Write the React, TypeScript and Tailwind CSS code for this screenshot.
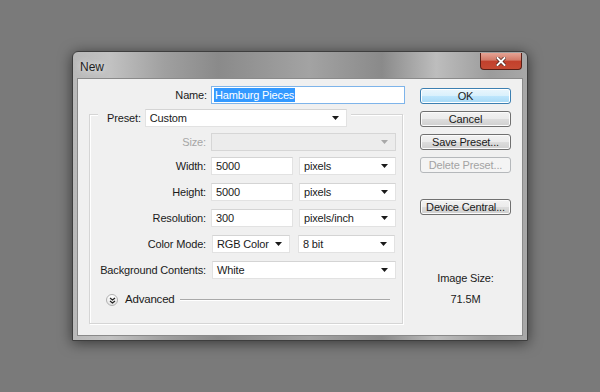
import React from "react"

const font = "font-['Liberation_Sans',Arial,sans-serif]"

function Caret({ light }: { light?: boolean }) {
  return (
    <svg width="7" height="4" viewBox="0 0 7 4" className="shrink-0">
      <path d="M0 0h7L3.5 4z" fill={light ? "#a8a8a8" : "#1a1a1a"} />
    </svg>
  )
}

function Select({ value, w, disabled }: { value?: string; w: string; disabled?: boolean }) {
  return (
    <div
      className={`${w} h-[18px] flex items-center justify-between pl-[4px] pr-[7px] border ${
        disabled
          ? "bg-[#ececec] border-[#d6d6d6]"
          : "bg-white border-[#e2e2e2] border-t-[#d4d4d4]"
      }`}
    >
      <span className="text-[#1a1a1a] leading-none">{value}</span>
      <Caret light={disabled} />
    </div>
  )
}

function Input({ value, w }: { value: string; w: string }) {
  return (
    <div className={`${w} h-[18px] flex items-center pl-[4px] bg-white border border-[#e2e2e2] border-t-[#d4d4d4]`}>
      <span className="leading-none">{value}</span>
    </div>
  )
}

function Row({ label, children, dim }: { label: string; children: React.ReactNode; dim?: boolean }) {
  return (
    <div className="flex items-center h-[18px]">
      <div className={`w-[117px] text-right pr-[1px] ${dim ? "text-[#a6a6a6]" : ""}`}>{label}</div>
      <div className="ml-[4px] flex gap-[6px]">{children}</div>
    </div>
  )
}

function Button({ label, primary, disabled }: { label: string; primary?: boolean; disabled?: boolean }) {
  const look = primary
    ? "border-[#3c7fb1] bg-[linear-gradient(#eaf6fd,#d9f0fc_50%,#bee6fd_51%,#a7d9f5)] shadow-[inset_0_0_0_1px_#ffffff]"
    : disabled
    ? "border-[#b5b8bb] bg-[#f4f4f4] text-[#a3a3a3]"
    : "border-[#707070] bg-[linear-gradient(#f2f2f2,#ebebeb_50%,#dddddd_51%,#cfcfcf)] shadow-[inset_0_0_0_1px_#fbfbfb]"
  return (
    <div className={`w-[91px] h-[16px] rounded-[3px] border flex items-center justify-center ${look}`}>
      {label}
    </div>
  )
}

export default function App() {
  return (
    <div className={`w-[600px] h-[392px] bg-[#7a7a7a] flex items-center justify-center ${font} text-[11px] tracking-[-0.15px] text-[#1a1a1a]`}>
      <div className="w-[456px] h-[290px] rounded-t-[6px] border border-[#3e3e3e] shadow-[0_2px_14px_rgba(0,0,0,0.55)] bg-[linear-gradient(90deg,#b9b9b9,#c2c2c2_8%,#a0a0a0_20%,#8a8a8a_32%,#a3a3a3_52%,#8a8a8a_68%,#bdbdbd_80%,#9c9c9c_92%,#a8a8a8)] flex flex-col px-[4px] pb-[4px]">
        {/* title bar */}
        <div className="h-[26px] flex items-start justify-between">
          <div className="pl-[3px] pt-[6px] text-[12px] tracking-normal text-[#1e1e1e] [text-shadow:0_0_6px_rgba(255,255,255,0.9)]">
            New
          </div>
          <div className="w-[42px] h-[17px] mt-[1px] mr-[1px] rounded-b-[4px] border border-[#5a1f16] border-t-0 bg-[linear-gradient(#e6a394,#d27a68_45%,#c2402c_50%,#c54a33)] flex items-center justify-center">
            <svg width="10" height="9" viewBox="0 0 10 9">
              <path d="M1.5 1l7 7M8.5 1l-7 7" stroke="#4a1a12" strokeWidth="3.4" strokeLinecap="square" />
              <path d="M1.5 1l7 7M8.5 1l-7 7" stroke="#ffffff" strokeWidth="2" strokeLinecap="square" />
            </svg>
          </div>
        </div>

        {/* content panel */}
        <div className="flex-1 bg-[#f0f0f0] border border-[#8a8a8a] flex">
          {/* left column */}
          <div className="w-[331px] pl-[11px] pt-[7px] flex flex-col">
            <div className="flex items-center h-[18px]">
              <div className="w-[118px] text-right">Name:</div>
              <div className="ml-[4px] w-[194px] h-[18px] bg-white border border-[#7eb4ea] flex items-center pl-[2px]">
                <span className="bg-[#3399ff] text-white px-[1px] leading-[14px]">Hamburg Pieces</span>
              </div>
            </div>

            {/* group box */}
            <div className="mt-[10px] w-[314px] h-[210px] border border-[#d5d5d5] shadow-[inset_1px_1px_0_#ffffff,1px_1px_0_#ffffff] flex flex-col">
              <div className="-mt-[6px] ml-[8px] w-fit bg-[#f0f0f0] pl-[9px] pr-[4px] flex items-center h-[18px]">
                <span className="mr-[4px]">Preset:</span>
                <Select value="Custom" w="w-[202px]" />
              </div>
              <div className="mt-[6px] flex flex-col gap-[8px]">
                <Row label="Size:" dim>
                  <Select w="w-[185px]" disabled />
                </Row>
                <div className="-mt-[2px]">
                  <Row label="Width:">
                    <Input value="5000" w="w-[82px]" />
                    <Select value="pixels" w="w-[97px]" />
                  </Row>
                </div>
                <Row label="Height:">
                  <Input value="5000" w="w-[82px]" />
                  <Select value="pixels" w="w-[97px]" />
                </Row>
                <Row label="Resolution:">
                  <Input value="300" w="w-[82px]" />
                  <Select value="pixels/inch" w="w-[97px]" />
                </Row>
                <Row label="Color Mode:">
                  <div className="ml-[1px]">
                    <Select value="RGB Color" w="w-[78px]" />
                  </div>
                  <div className="ml-[2px]">
                    <Select value="8 bit" w="w-[97px]" />
                  </div>
                </Row>
                <Row label="Background Contents:">
                  <div className="ml-[1px]">
                    <Select value="White" w="w-[184px]" />
                  </div>
                </Row>
              </div>
              <div className="mt-[14px] ml-[16px] mr-[12px] flex items-center h-[14px]">
                <div className="w-[12px] h-[12px] rounded-full border border-[#b0b0b0] bg-[linear-gradient(#ffffff,#e4e4e4)] flex items-center justify-center">
                  <svg width="7" height="7" viewBox="0 0 7 7">
                    <path d="M1 1l2.5 2 2.5-2M1 4l2.5 2 2.5-2" stroke="#222" strokeWidth="1.2" fill="none" />
                  </svg>
                </div>
                <span className="ml-[7px] text-[11.5px] tracking-[-0.2px]">Advanced</span>
                <div className="ml-[5px] flex-1 h-[2px] border-t border-[#a9a9a9] border-b border-b-white" />
              </div>
            </div>
          </div>

          {/* right column */}
          <div className="flex-1 pl-[11px] pt-[9px] flex flex-col">
            <div className="flex flex-col gap-[7px]">
              <Button label="OK" primary />
              <Button label="Cancel" />
              <Button label="Save Preset..." />
              <Button label="Delete Preset..." disabled />
            </div>
            <div className="mt-[26px]">
              <Button label="Device Central..." />
            </div>
            <div className="w-[91px] mt-[57px] text-center leading-[13px]">Image Size:</div>
            <div className="w-[91px] mt-[8px] text-center leading-[13px]">71.5M</div>
          </div>
        </div>
      </div>
    </div>
  )
}
